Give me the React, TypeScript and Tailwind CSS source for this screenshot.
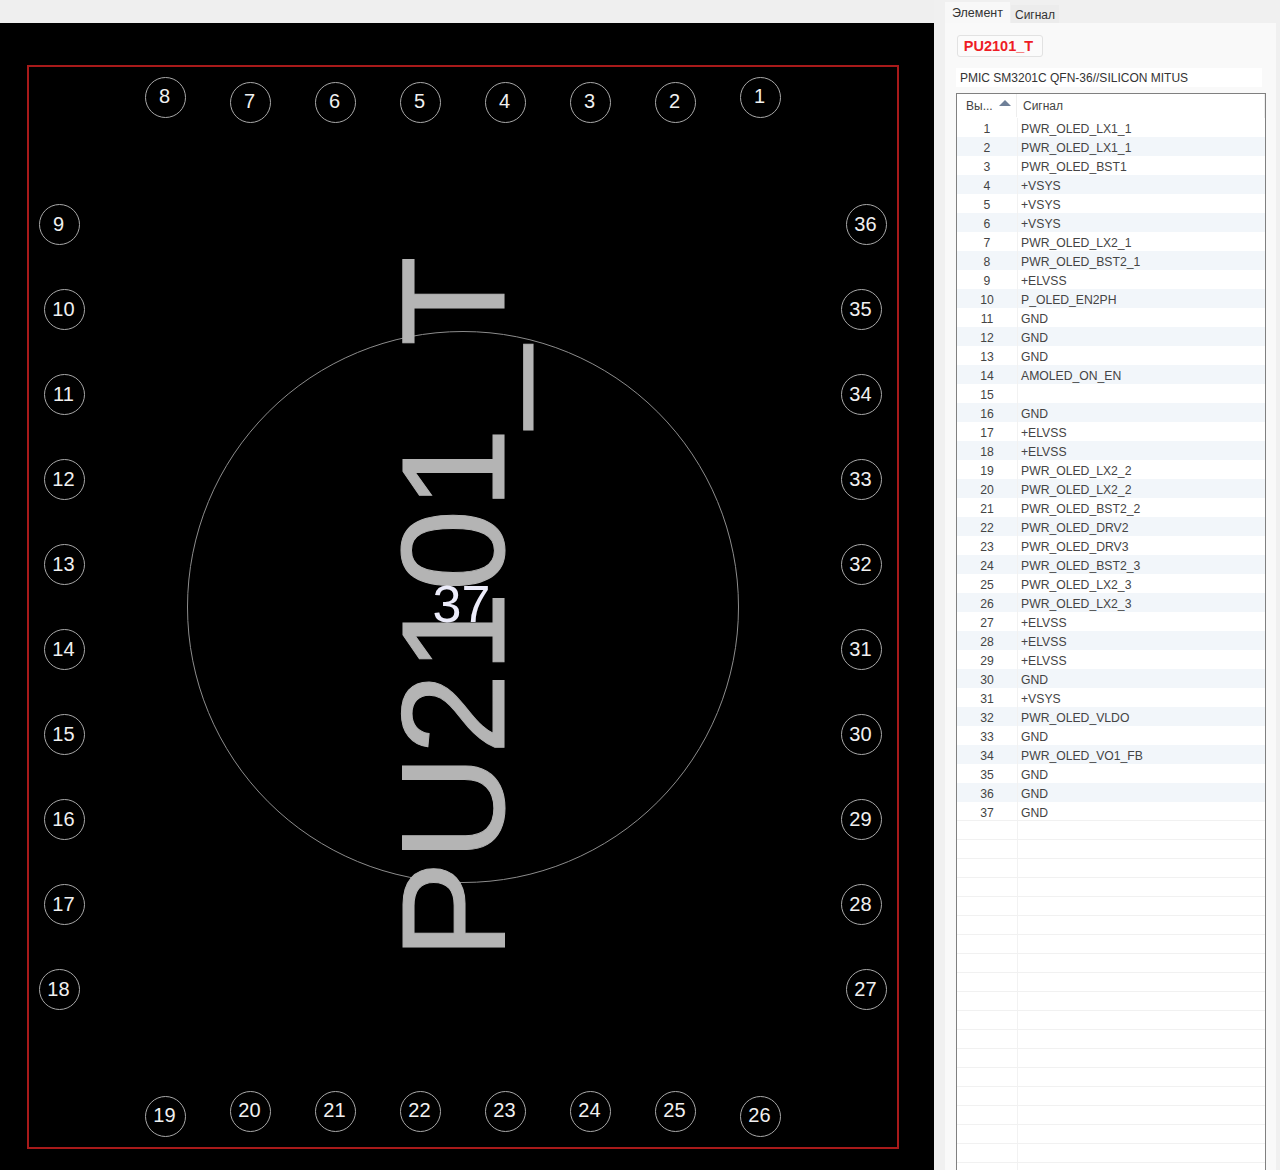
const pins: [string, number, number][] = [
  ["8", 165, 97], ["7", 250, 102], ["6", 335, 102], ["5", 420, 102], ["4", 505, 102], ["3", 590, 102], ["2", 675, 102], ["1", 760, 97],
  ["9", 59, 224], ["10", 64, 309], ["11", 64, 394], ["12", 64, 479], ["13", 64, 564], ["14", 64, 649], ["15", 64, 734], ["16", 64, 819], ["17", 64, 904], ["18", 59, 989],
  ["36", 866, 224], ["35", 861, 309], ["34", 861, 394], ["33", 861, 479], ["32", 861, 564], ["31", 861, 649], ["30", 861, 734], ["29", 861, 819], ["28", 861, 904], ["27", 866, 989],
  ["19", 165, 1116], ["20", 250, 1111], ["21", 335, 1111], ["22", 420, 1111], ["23", 505, 1111], ["24", 590, 1111], ["25", 675, 1111], ["26", 760, 1116],
];

const signals = [
  "PWR_OLED_LX1_1", "PWR_OLED_LX1_1", "PWR_OLED_BST1", "+VSYS", "+VSYS", "+VSYS", "PWR_OLED_LX2_1", "PWR_OLED_BST2_1", "+ELVSS", "P_OLED_EN2PH",
  "GND", "GND", "GND", "AMOLED_ON_EN", "", "GND", "+ELVSS", "+ELVSS", "PWR_OLED_LX2_2", "PWR_OLED_LX2_2",
  "PWR_OLED_BST2_2", "PWR_OLED_DRV2", "PWR_OLED_DRV3", "PWR_OLED_BST2_3", "PWR_OLED_LX2_3", "PWR_OLED_LX2_3", "+ELVSS", "+ELVSS", "+ELVSS", "GND",
  "+VSYS", "PWR_OLED_VLDO", "GND", "PWR_OLED_VO1_FB", "GND", "GND", "GND",
];

export default function App() {
  const empties = Array.from({ length: 19 });
  return (
    <div className="flex h-[1170px] w-[1280px] overflow-hidden bg-[#f0f0f0] [font-family:Liberation_Sans,Arial,sans-serif]">
      <div className="flex w-[934px] shrink-0 flex-col">
        <div className="h-[23px] shrink-0 bg-[#efefef]" />
        <div className="relative flex-1 overflow-hidden bg-black">
          <div className="absolute left-[27px] top-[42px] h-[1084px] w-[872px] border-2 border-[#a81a1a]" />
          <div className="absolute left-[187px] top-[308px] h-[552px] w-[552px] rounded-full border border-[#8c8c8c]" />
          <div className="absolute left-[453px] top-[584px] flex h-0 w-0 items-center justify-center">
            <span className="-rotate-90 whitespace-nowrap text-[147px] leading-none text-[#b4b4b4] [-webkit-text-stroke:1px_#b4b4b4]">PU2101_T</span>
          </div>
          <div className="absolute left-[461.5px] top-[581px] flex h-0 w-0 items-center justify-center">
            <span className="whitespace-nowrap text-[52px] leading-none text-[#ececfa]">37</span>
          </div>
          {pins.map(([n, x, y]) => {
            const num = Number(n);
            const edge = num <= 8 || (num >= 19 && num <= 26);
            return (
              <div
                key={n}
                className={`absolute flex h-[41.5px] w-[41.5px] items-center justify-center rounded-full border border-[#a8a8a8] pr-[2px] text-[20px] leading-none text-[#f0f0f0] ${edge ? "pb-[3px]" : "pb-px"}`}
                style={{ left: x - 20.3, top: y - 23 - 20.3 }}
              >
                {n}
              </div>
            );
          })}
        </div>
      </div>
      <div className="flex flex-1 flex-col pl-[11px] pr-[4px]">
        <div className="flex h-[23px] shrink-0 items-end text-[12.5px] leading-none text-[#333]">
          <div className="flex h-[21px] w-[65px] items-start justify-center bg-[#f8f8f8] pt-[5px]">Элемент</div>
          <div className="ml-px flex h-[18px] w-[48px] items-start justify-center bg-[#ececec] pt-[4px] text-[12px]">Сигнал</div>
        </div>
        <div className="flex min-h-0 flex-1 flex-col bg-[#f9f9f9] pl-[11px] pr-[10px]">
          <div className="ml-px mt-[12px] flex h-[22px] w-[86px] items-center justify-center rounded-[3px] border border-[#e2e2e2] bg-[#fbfbfb] pr-[3px] text-[14.5px] font-bold leading-none text-[#ee1c25]">
            PU2101_T
          </div>
          <div className="mt-[11px] flex h-[19px] w-[306px] items-center bg-white pl-[4px] text-[12px] leading-none text-[#333]">
            PMIC SM3201C QFN-36//SILICON MITUS
          </div>
          <div className="mt-[6px] flex min-h-0 flex-1 flex-col overflow-hidden border border-b-0 border-[#808080] bg-white text-[12.2px] leading-none text-[#444]">
            <div className="flex h-[24px] shrink-0 items-center border-r border-[#eeeeee] bg-white pb-px text-[12px]">
              <div className="relative flex h-full w-[60px] shrink-0 items-center border-r border-[#eeeeee] pl-[9px]">
                Вы...
                <svg className="absolute left-[42px] top-[6px]" width="12" height="6" viewBox="0 0 12 6">
                  <path d="M6 0 L12 6 H0 Z" fill="#6f8098" />
                </svg>
              </div>
              <div className="pl-[6px]">Сигнал</div>
            </div>
            {signals.map((s, i) => (
              <div key={i} className={`flex h-[19px] shrink-0 items-center ${i === 36 ? "border-b border-[#f1f1f1] " : ""}${i % 2 === 1 ? "bg-[#f2f6fa]" : "bg-white"}`}>
                <div className="flex h-full w-[61px] shrink-0 items-center justify-center border-r border-[#f2f2f2] pt-[4px]">{i + 1}</div>
                <div className="pl-[3px] pt-[4px]">{s}</div>
              </div>
            ))}
            {empties.map((_, i) => (
              <div key={i} className="flex h-[19px] shrink-0 border-b border-[#f1f1f1]">
                <div className="h-full w-[61px] shrink-0 border-r border-[#f2f2f2]" />
              </div>
            ))}
          </div>
        </div>
      </div>
    </div>
  );
}
